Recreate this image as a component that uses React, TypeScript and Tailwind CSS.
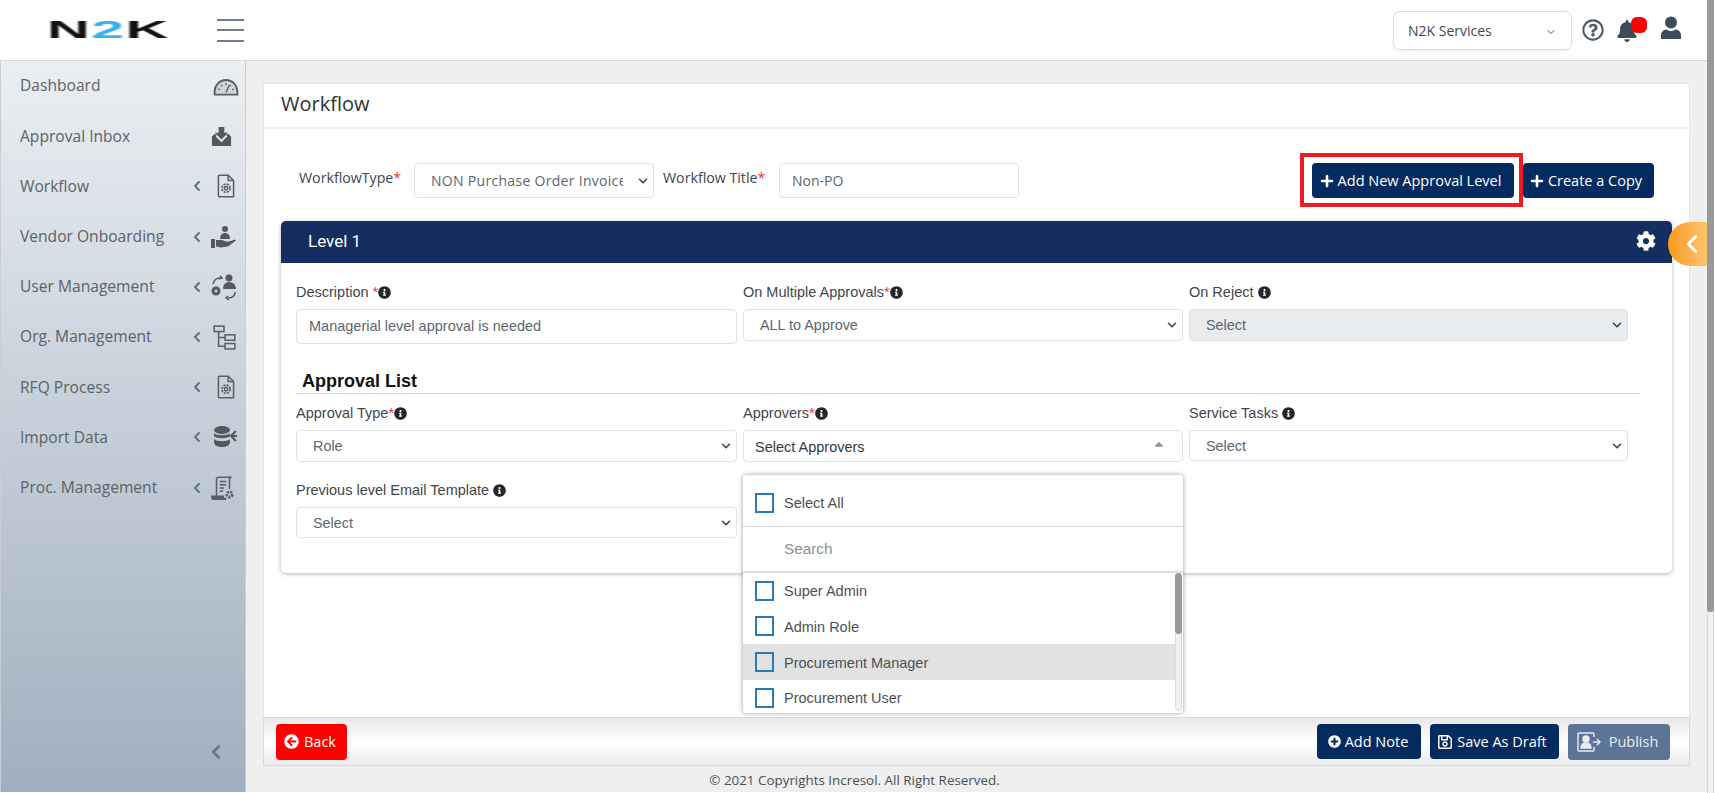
import React from "react";
import { ChevronDown, ChevronLeft } from "lucide-react";
import { FaPlus, FaCog, FaInfoCircle, FaArrowCircleLeft, FaPlusCircle, FaRegSave, FaBell, FaRegQuestionCircle, FaCaretUp } from "react-icons/fa";

const I = ({ children, w = 26, h = 26 }: { children: React.ReactNode; w?: number; h?: number }) => (
  <svg width={w} height={h} viewBox="0 0 24 24" fill="none" stroke="#5a5f66" strokeWidth="1.4">{children}</svg>
);
const GearDoc = () => (
  <span className="ml-[4px]">
    <I>
      <path d="M6 2h8l5 5v15H6a1 1 0 0 1-1-1V3a1 1 0 0 1 1-1z" />
      <path d="M14 2v5h5" />
      <circle cx="12" cy="14" r="1.6" />
      <circle cx="12" cy="14" r="3.8" strokeDasharray="2 1" strokeWidth="1.6" />
    </I>
  </span>
);
const icons: Record<string, React.ReactNode> = {
  dash: (
    <span className="ml-[4px]">
      <svg width="26" height="26" viewBox="0 0 24 24" fill="none" stroke="#5a5f66" strokeWidth="1.7">
        <path d="M1.500 20v-3a10.500 10.500 0 0 1 21 0v3z" fill="#cfd5db" />
        <path d="M12 18l3-7M5 15l1.500.4M19 15l-1.500.4M12 9.500v1.500M7.500 11l1 1M16.500 11l-1 1" strokeWidth="1.3" />
      </svg>
    </span>
  ),
  inbox: (
    <span className="-ml-[6px]">
      <svg width="23" height="23" viewBox="0 0 24 24" fill="#55595f">
        <path d="M9 2h6v6h4l-7 7-7-7h4z" />
        <path d="M2 12l3-3 2 2-1 1 6 6 6-6-1-1 2-2 3 3v10H2z" />
      </svg>
    </span>
  ),
  doc: <GearDoc />,
  vendor: (
    <svg width="28" height="26" viewBox="0 0 28 26" fill="#55595f">
      <circle cx="15" cy="5" r="3" />
      <path d="M10 15c0-4 2-6 5-6s5 2 5 6z" />
      <rect x="1" y="15" width="4" height="9" />
      <path d="M6 16h6l4 1.500h3l6-2 1 1-8 6-7 1-5-1z" />
    </svg>
  ),
  user: (
    <svg width="28" height="28" viewBox="0 0 28 28" fill="#55595f">
      <circle cx="19" cy="5" r="3.500" />
      <path d="M13 16c0-4 2-7 6-7s7 3 7 7z" />
      <circle cx="6" cy="18" r="4.500" />
      <circle cx="6" cy="18" r="1.500" fill="#d0d7df" />
      <path d="M3 11c1-4 4-6 7-6M10 3l2 2-3 1M25 19c0 4-3 6-7 6M18 23l-2 2 3 2" fill="none" stroke="#55595f" strokeWidth="1.500" />
    </svg>
  ),
  org: (
    <I>
      <rect x="3" y="2" width="9" height="5" />
      <rect x="13" y="10" width="9" height="5" />
      <rect x="13" y="18" width="9" height="5" />
      <path d="M7 7v13.500h6M7 12.500h6" />
    </I>
  ),
  db: (
    <span className="ml-[2px]">
      <svg width="26" height="24" viewBox="0 0 26 24" fill="#55595f">
        <ellipse cx="10" cy="5" rx="8" ry="4" />
        <path d="M2 8c2 3 14 3 16 0v3c-2 3-14 3-16 0zM2 14c2 3 14 3 16 0v3c0 3-3 5-8 5s-8-2-8-5z" />
        <path d="M24 6l-5 5 5 5" fill="none" stroke="#55595f" strokeWidth="2" />
        <path d="M19 11h6" stroke="#55595f" strokeWidth="2" />
      </svg>
    </span>
  ),
  proc: (
    <span className="-ml-[2px]">
      <I>
        <path d="M6 20V4a2 2 0 0 1 2-2h12a2 2 0 0 0-2 2v9" />
        <path d="M2 22h13M2 22v-2h11" strokeWidth="2" />
        <path d="M9 6h6M9 9h6M9 12h4M9 15h3" />
        <circle cx="18" cy="18" r="2.500" strokeWidth="2.500" strokeDasharray="2 1" />
      </I>
    </span>
  ),
};

const nav = [
  ["Dashboard", "dash", false],
  ["Approval Inbox", "inbox", false],
  ["Workflow", "doc", true],
  ["Vendor Onboarding", "vendor", true],
  ["User Management", "user", true],
  ["Org. Management", "org", true],
  ["RFQ Process", "doc", true],
  ["Import Data", "db", true],
  ["Proc. Management", "proc", true],
] as const;

const Select = ({ value, className = "", disabled = false }: { value: string; className?: string; disabled?: boolean }) => (
  <div className={`relative ${className}`}>
    <select
      disabled={disabled}
      defaultValue={value}
      className={`w-full h-full appearance-none rounded-[4px] border border-[#dfe3e8] pl-4 pr-7 pt-[2px] text-[14.400px] text-[#5c6670] outline-none ${disabled ? "bg-[#e9ecef]" : "bg-white"}`}
    >
      <option>{value}</option>
    </select>
    <ChevronDown size={14} strokeWidth={2.8} className="absolute right-[4px] top-1/2 -translate-y-1/2 text-[#3f454b] pointer-events-none" />
  </div>
);

const Req = () => <span className="text-[#f0323c]">*</span>;
const Info = () => <FaInfoCircle size={13} className="inline-block text-[#23282d] align-[-1.500px]" />;
const Label = ({ children }: { children: React.ReactNode }) => (
  <label className="block h-[17px] leading-[17px] text-[14.500px] text-[#40464c] whitespace-nowrap">{children}</label>
);
const Check = () => <span className="w-[19px] h-[20px] border-2 border-[#2f78b7] shrink-0" />;
const Btn = ({ children, className = "" }: { children: React.ReactNode; className?: string }) => (
  <button className={`h-[35px] rounded-[4px] bg-[#032b60] text-white text-[14.500px] flex items-center justify-center ${className}`}>{children}</button>
);

export default function App() {
  return (
    <div className="relative w-[1715px] h-[793px] overflow-hidden bg-white flex font-['Open_Sans',sans-serif]">
      <div className="flex-1 min-w-0 flex flex-col h-[792px]">
        <header className="h-[61px] shrink-0 bg-white border-b border-[#d4d8dc] flex items-center">
          <div className="w-[244px] h-full flex items-center justify-between pl-[47px] shrink-0">
            <span className="inline-block w-[60px] origin-left text-[23px] leading-none font-black font-['Liberation_Sans',sans-serif] tracking-[0.5px] scale-x-[2.58] blur-[0.5px] text-[#111] whitespace-nowrap mt-[1px]">
              N<span className="text-[#37b3ec]">2</span>K
            </span>
            <span className="flex flex-col gap-[8.500px] w-[27px] shrink-0">
              <span className="h-[2px] bg-[#6d7f90]" />
              <span className="h-[2px] bg-[#6d7f90]" />
              <span className="h-[2px] bg-[#6d7f90]" />
            </span>
          </div>
          <div className="ml-auto flex items-center pr-[24px]">
            <div className="relative w-[179px] h-[39px] rounded-[7px] border border-[#d9dde1] flex items-center pl-[14px] text-[14px] text-[#3a4a58] shadow-[0_1px_2px_rgba(0,0,0,0.08)]">
              N2K Services
              <ChevronDown size={12} strokeWidth={2} className="absolute right-[14px] top-[14px] text-[#4b5560]" />
            </div>
            <FaRegQuestionCircle size={22} className="ml-[10px] text-[#495a69]" />
            <div className="relative ml-[12px] w-[24px] h-[24px]">
              <FaBell size={22} className="text-[#3c4c5b] mt-[2px]" />
              <span className="absolute -right-[7px] -top-[1px] w-[16px] h-[16px] rounded-[6px] bg-[#ff0000]" />
            </div>
            <svg width="22" height="24" viewBox="0 0 22 24" fill="#3c4c5b" className="ml-[20px] mr-[1px] -mt-[5px]">
              <circle cx="11" cy="6.500" r="6" />
              <path d="M1 23v-4c0-3 2.500-5.500 5.500-5.500 1.500 1 3 1.500 4.500 1.500s3-.5 4.500-1.500c3 0 5.500 2.500 5.500 5.500v4z" />
            </svg>
          </div>
        </header>

        <div className="flex-1 min-h-0 flex bg-[#efefef]">
          <aside className="w-[246px] shrink-0 border-x border-[#c9ced4] bg-gradient-to-b from-[#ebeff3] to-[#a0afbf] flex flex-col">
            {nav.map(([name, ic, arrow]) => (
              <div key={name} className="h-[50.200px] shrink-0 flex items-center pl-[19px] pr-[7px] text-[15.600px] text-[#5c6268]">
                <span>{name}</span>
                <span className="ml-auto flex items-center">
                  {arrow && <ChevronLeft size={16} strokeWidth={3} className="text-[#5d7286] mr-[5px]" />}
                  <span className="w-[28px] h-[28px] flex items-center justify-center">{icons[ic]}</span>
                </span>
              </div>
            ))}
            <div className="mt-auto pb-[29px] pr-[18px] flex justify-end">
              <ChevronLeft size={22} strokeWidth={3} className="text-[#64788c]" />
            </div>
          </aside>

          <main className="flex-1 min-w-0 flex flex-col pl-[17px] pr-[17px] pt-[22px]">
            <div className="h-[634px] shrink-0 bg-white border border-[#e6e6e6] border-b-0 flex flex-col">
              <div className="h-[45px] shrink-0 border-b-2 border-[#efefef] flex items-center pl-[17px] text-[20px] text-[#2d3236] pb-[3px]">Workflow</div>
              <div className="pl-[17px] pr-[17px]">
                <div className="relative h-[92px] pt-[34px] flex items-start">
                  <span className="ml-[18px] mt-[4px] text-[14.200px] text-[#40464c] whitespace-nowrap w-[115px]">WorkflowType<Req /></span>
                  <Select value="NON Purchase Order Invoice" className="w-[240px] h-[35px] [&_select]:pt-0 [&_select]:text-[14px] [&_select]:tracking-[0.3px] [&_select]:pl-[16px] [&_select]:pr-[30px]" />
                  <span className="ml-[9px] mt-[4px] text-[14.200px] text-[#40464c] whitespace-nowrap w-[116px]">Workflow Title<Req /></span>
                  <div className="w-[240px] h-[35px] rounded-[4px] border border-[#dfe3e8] pl-[12px] flex items-center text-[14px] text-[#5c6670]">Non-PO</div>
                  <div className="ml-auto mr-[18px] flex items-center">
                    <div className="border-[4px] border-[#ed1c24] pt-[6px] pb-[5px] pr-[5px] pl-[8px] -mt-[10px] -mb-[9px] flex">
                      <Btn className="w-[202px] gap-[4px] pr-[5px]"><FaPlus size={14} />Add New Approval Level</Btn>
                    </div>
                    <Btn className="w-[131px] gap-[4px] pr-[5px]"><FaPlus size={14} />Create a Copy</Btn>
                  </div>
                </div>

                <div className="relative h-[352px] rounded-[5px] bg-white shadow-[0_1px_4px_rgba(0,0,0,0.3)] font-['Liberation_Sans',sans-serif]">
                  <div className="h-[42px] rounded-t-[5px] bg-[#142e5f] text-white flex items-center pl-[27px] pr-[16px]">
                    <span className="font-['Roboto',sans-serif] text-[17px]">Level 1</span>
                    <FaCog size={20} className="ml-auto -mt-[2px]" />
                  </div>
                  <div className="pl-[15px] pr-[30px] pt-[21px]">
                    <div className="flex gap-[6px]">
                      <div className="w-[441px]">
                        <Label>Description <Req /><Info /></Label>
                        <div className="mt-[8px] h-[35px] rounded-[4px] border border-[#dfe3e8] pl-[12px] flex items-center text-[14.500px] text-[#5c6670]">Managerial level approval is needed</div>
                      </div>
                      <div className="w-[440px]">
                        <Label>On Multiple Approvals<Req /><Info /></Label>
                        <Select value="ALL to Approve" className="mt-[8px] h-[32px]" />
                      </div>
                      <div className="w-[439px]">
                        <Label>On Reject <Info /></Label>
                        <Select value="Select" className="mt-[8px] h-[32px]" disabled />
                      </div>
                    </div>

                    <div className="mt-[27px] mr-[2px] border-b border-[#cfd3d7] pl-[6px] h-[23px] leading-[20px] text-[18px] font-bold text-[#111]">Approval List</div>

                    <div className="mt-[11px] flex gap-[6px]">
                      <div className="w-[441px]">
                        <Label>Approval Type<Req /><Info /></Label>
                        <Select value="Role" className="mt-[8px] h-[32px]" />
                      </div>
                      <div className="relative w-[440px]">
                        <Label>Approvers<Req /><Info /></Label>
                        <div className="relative mt-[8px] h-[32px] rounded-[4px] border border-[#dfe3e8] pl-[11px] pt-[4px] flex items-center text-[14.500px] text-[#33393f] bg-white">
                          Select Approvers
                          <FaCaretUp size={14} className="absolute right-[16px] top-[6px] text-[#8d9399]" />
                        </div>
                        <div className="absolute z-10 left-0 top-[70px] w-[440px] h-[238px] rounded-[3px] bg-white shadow-[0_0_5px_rgba(0,0,0,0.4)] text-[14.500px] text-[#4b5157] overflow-hidden">
                          <div className="h-[52px] border-b border-[#d5d8db] flex items-center gap-[10px] pl-[12px] pt-[5px]"><Check /><span className="mt-[2px]">Select All</span></div>
                          <div className="h-[46px] border-b-2 border-[#dcdfe2] pl-[41px] flex items-center text-[#8a8f94] text-[15.300px]">Search</div>
                          <div className="relative">
                            {["Super Admin", "Admin Role", "Procurement Manager", "Procurement User"].map((t) => (
                              <div key={t} className={`h-[35.600px] flex items-center gap-[10px] pl-[12px] ${t === "Procurement Manager" ? "bg-[#e2e2e2] mr-[8px]" : ""}`}><Check /><span className="mt-[3px]">{t}</span></div>
                            ))}
                            <div className="absolute top-0 right-[1px] h-[138px] w-[7px] rounded-full bg-[#f1f1f1] border border-[#dcdcdc]">
                              <div className="h-[61px] -mx-px -mt-px rounded-full bg-[#9a9a9a]" />
                            </div>
                          </div>
                        </div>
                      </div>
                      <div className="w-[439px]">
                        <Label>Service Tasks <Info /></Label>
                        <Select value="Select" className="mt-[8px] h-[31px]" />
                      </div>
                    </div>

                    <div className="mt-[20px] w-[441px]">
                      <Label>Previous level Email Template <Info /></Label>
                      <Select value="Select" className="mt-[8px] h-[31px]" />
                    </div>
                  </div>
                </div>
              </div>
            </div>

            <div className="h-[49px] shrink-0 border border-[#d5d8dc] bg-gradient-to-b from-[#e8e8e8] via-white to-[#ececec] flex items-center pl-[12px] pr-[19px]">
              <button className="w-[71px] h-[36px] rounded-[4px] bg-[#ff0000] text-white text-[14.500px] flex items-center justify-center gap-[5px] pr-[3px]"><FaArrowCircleLeft size={15} />Back</button>
              <Btn className="ml-auto w-[104px] gap-[4px] pr-[2px]"><FaPlusCircle size={13} />Add Note</Btn>
              <Btn className="ml-[9px] w-[129px] gap-[4px] pr-[5px]"><FaRegSave size={16} />Save As Draft</Btn>
              <button className="ml-[9px] w-[102px] h-[36px] rounded-[4px] bg-[#5c7596] text-[#e8edf2] text-[14.500px] flex items-center justify-center gap-[8px] pr-[3px]">
                <svg width="24" height="20" viewBox="0 0 24 20" fill="none" stroke="#e8edf2" strokeWidth="1.400">
                  <path d="M17 5V2a1 1 0 0 0-1-1H2a1 1 0 0 0-1 1v16a1 1 0 0 0 1 1h14a1 1 0 0 0 1-1v-3" />
                  <circle cx="9" cy="7" r="3" fill="#e8edf2" />
                  <path d="M4 16c0-3 2-5 5-5s5 2 5 5z" fill="#e8edf2" />
                  <path d="M16 10h7M20 7l3 3-3 3" />
                </svg>
                Publish
              </button>
            </div>
            <div className="flex-1 flex items-center justify-center text-[13.400px] text-[#4a4f54] pr-[244px] pt-[3px]">© 2021 Copyrights Incresol. All Right Reserved.</div>
          </main>
        </div>
      </div>

      <div className="absolute z-20 right-[8px] top-[222px] w-[39px] h-[44px] rounded-l-full bg-gradient-to-r from-[#fb9a14] to-[#fdc46c] flex items-center justify-center">
        <ChevronLeft size={30} strokeWidth={2.4} className="text-white ml-[8px]" />
      </div>

      <div className="w-[8px] h-full shrink-0 bg-white">
        <div className="w-[7px] h-full bg-[#efefef] border-x border-[#d6d6d6]">
          <div className="-mx-px h-[612px] rounded-b-[3px] bg-[#999999]" />
        </div>
      </div>
    </div>
  );
}
